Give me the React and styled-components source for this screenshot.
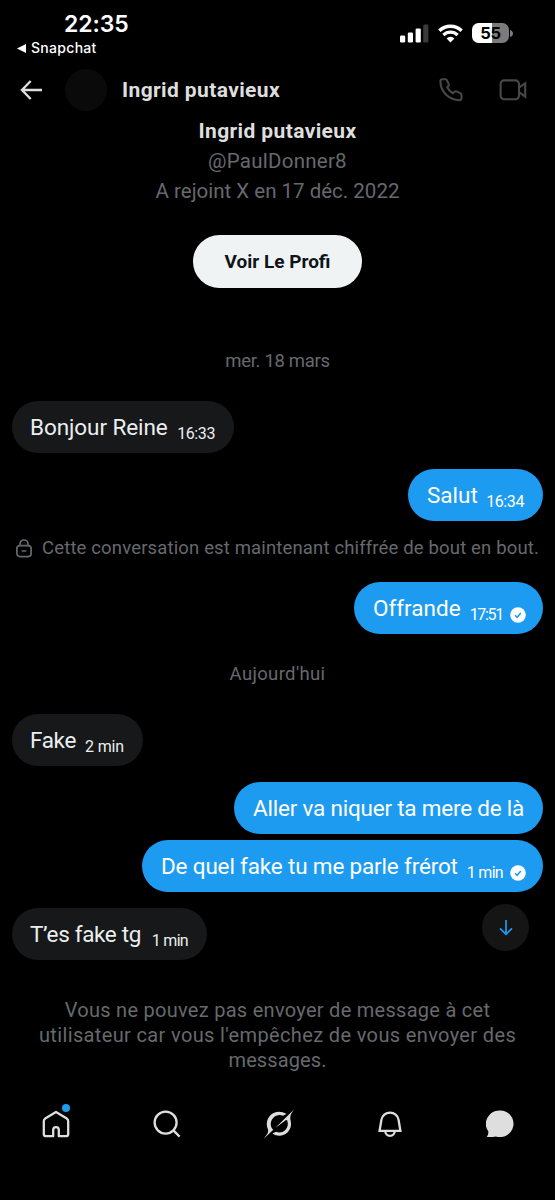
import React from "react";
import styled, { createGlobalStyle } from "styled-components";

const messages = [
  { id: 1, kind: "date", text: "mer. 18 mars", top: 0, spacing: -0.3 },
  { id: 2, kind: "in", text: "Bonjour Reine", time: "16:33", width: 222, top: 28, spacing: -0.08, timeSpacing: -0.4 },
  { id: 3, kind: "out", text: "Salut", time: "16:34", width: 135, top: 16, spacing: 0, timeSpacing: -0.4 },
  { id: 4, kind: "lock", text: "Cette conversation est maintenant chiffrée de bout en bout.", top: 15, spacing: 0.15 },
  { id: 5, kind: "out", text: "Offrande", time: "17:51", seen: true, width: 189, top: 22, spacing: 0, timeSpacing: -1.3 },
  { id: 6, kind: "date", text: "Aujourd'hui", top: 28, spacing: 0.35 },
  { id: 7, kind: "in", text: "Fake", time: "2 min", width: 131, top: 28, spacing: -0.35, timeSpacing: -0.15 },
  { id: 8, kind: "out", text: "Aller va niquer ta mere de là", width: 309, top: 16, spacing: -0.21 },
  { id: 9, kind: "out", text: "De quel fake tu me parle frérot", time: "1 min", seen: true, width: 401, top: 6, spacing: -0.17, timeSpacing: -0.7 },
  { id: 10, kind: "in", text: "T’es fake tg", time: "1 min", width: 195, top: 16, spacing: -0.35, timeSpacing: -0.7 }
];

const StatusBar = () => (
  <StatusStyled>
    <Clock>
      <Time>22:35</Time>
      <BackApp>
        <svg width="9" height="9" viewBox="0 0 9 9"><path d="M0 4.5 9 0v9z" fill="#fff" /></svg>
        Snapchat
      </BackApp>
    </Clock>
    <StatusIcons>
      <svg width="29" height="19" viewBox="0 0 29 19" fill="#fff">
        <rect x="0" y="11.5" width="5.2" height="7" rx="1.3" />
        <rect x="7.8" y="8.5" width="5.2" height="10" rx="1.3" />
        <rect x="15.6" y="4.5" width="5.2" height="14" rx="1.3" />
        <rect x="23.2" y="0.5" width="5.2" height="18" rx="1.3" fill="#3a3a3a" />
      </svg>
      <svg width="25" height="19" viewBox="0 0 25 19" fill="none" stroke="#fff">
        <path d="M1.4 6.8a15.8 15.8 0 0 1 22.2 0" strokeWidth="3.4" />
        <path d="M5.4 11a10 10 0 0 1 14.2 0" strokeWidth="3.2" />
        <path d="M12.5 18.4 8.6 14.4a5.6 5.6 0 0 1 7.8 0z" fill="#fff" stroke="none" />
      </svg>
      <Battery>
        <BatteryLevel>55</BatteryLevel>
        <svg width="3" height="7" viewBox="0 0 3 7"><path d="M0 0c4 1 4 6 0 7z" fill="#7b7b7b" /></svg>
      </Battery>
    </StatusIcons>
  </StatusStyled>
);

const Header = () => (
  <HeaderStyled>
    <svg width="22" height="20" viewBox="0 0 22 20" fill="none" stroke="#dedede" strokeWidth="2.4">
      <path d="M10.7 1 2 10l8.700 9M2 10h20" />
    </svg>
    <Avatar />
    <HeaderName>Ingrid putavieux</HeaderName>
    <PhoneIcon width="24" height="24" viewBox="0 0 24 24" fill="none" stroke="#484848" strokeWidth="2.1" strokeLinejoin="round">
      <path d="M3.400 1.300H6.300Q7.400 1.300 7.900 2.300L9.700 5.900Q10.200 7 9.400 7.900L8.200 9.200Q9.900 13 14 15.200L15.600 13.700Q16.500 12.900 17.500 13.400L21.600 15.400Q22.500 15.900 22.500 16.900V20.200Q22.500 22.200 20.500 22.200C10.500 22.200 1.400 14 1.400 3.300Q1.400 1.300 3.400 1.300Z" />
    </PhoneIcon>
    <svg width="28" height="22" viewBox="0 0 28 22" fill="none" stroke="#484848" strokeWidth="2.1">
      <rect x="1.600" y="1.400" width="18.400" height="18.800" rx="3.600" />
      <path d="M20 8.600 26.200 4.200v13.400L20 13.200" />
    </svg>
  </HeaderStyled>
);

const Message = ({ item }) => {
  if (item.kind === "date") {
    return <Note $top={item.top} $spacing={item.spacing}>{item.text}</Note>;
  }
  if (item.kind === "lock") {
    return (
      <Note $top={item.top} $spacing={item.spacing}>
        <LockIcon width="16" height="19" viewBox="0 0 16 19" fill="none" stroke="#66696d" strokeWidth="1.7">
          <rect x="0.9" y="6.6" width="14.2" height="11" rx="3" />
          <path d="M4 6.6V5a4 4 0 0 1 8 0v1.6M5.6 12h4.8" />
        </LockIcon>
        {item.text}
      </Note>
    );
  }
  return (
    <Bubble $mine={item.kind === "out"} $width={item.width} $top={item.top}>
      <BubbleText $spacing={item.spacing}>{item.text}</BubbleText>
      {item.time && <BubbleTime $spacing={item.timeSpacing}>{item.time}</BubbleTime>}
      {item.seen && (
        <SeenIcon width="16" height="16" viewBox="0 0 16 16">
          <circle cx="8" cy="8" r="7.8" fill="#fff" />
          <path d="m5 8.3 2.1 2 3.7-4.3" fill="none" stroke="#1d9bf0" strokeWidth="1.5" />
        </SeenIcon>
      )}
    </Bubble>
  );
};

const TabBar = () => (
  <TabBarStyled>
    <Tab>
      <svg width="28" height="28" viewBox="0 0 28 28" fill="none" stroke="#dedede" strokeWidth="2.3" strokeLinejoin="round">
        <path d="M11.2 26.2H4a2.2 2.2 0 0 1-2.2-2.2V11.2Q1.8 9.6 3.2 8.6L14 2l10.8 6.6Q26.2 9.6 26.2 11.2V24a2.2 2.2 0 0 1-2.2 2.2h-7.200V20a2.800 2.800 0 0 0-5.600 0z" />
      </svg>
      <Badge />
    </Tab>
    <Tab>
      <svg width="28" height="28" viewBox="0 0 28 28" fill="none" stroke="#dedede" strokeWidth="2.3">
        <circle cx="12.600" cy="12.600" r="11" />
        <path d="m20.400 20.400 6.200 6.200" />
      </svg>
    </Tab>
    <Tab $shift={2}>
      <svg width="32" height="32" viewBox="0 0 32 32" fill="#dedede">
        <path d="M12.200 20 22.700 12.200c.5-.4 1.250-.25 1.500.35 1.300 3.150.7 6.900-1.850 9.450-2.550 2.550-6.100 3.100-9.350 1.850l-3.550 1.650c5.100 3.500 11.300 2.600 15.200-1.250 3.050-3.050 4-7.250 3.100-11.050C26.500 7.800 28 5.500 31.500 1L12.200 20M10.300 21.700C6.600 18.200 7.250 12.800 10.400 9.650c2.350-2.350 6.200-3.300 9.550-1.900l3.550-1.650C17.700 2.500 11.200 3.500 7.400 7.300c-3.450 3.450-4.550 8.800-2.650 13.400C6.200 24.100 3.900 26.500 1 30.500z" />
      </svg>
    </Tab>
    <Tab $shift={2}>
      <svg width="24" height="28" viewBox="0 0 24 28" fill="none" stroke="#dedede" strokeWidth="2.3">
        <path d="M1.600 20.800 3.400 10a8.700 8.700 0 0 1 17.200 0l1.800 10.800zM7.200 21a4.800 4.800 0 0 0 9.600 0" />
      </svg>
    </Tab>
    <Tab>
      <svg width="28" height="28" viewBox="0 0 28 28" fill="#dedede">
        <path d="M14.300.5a13.500 13.300 0 1 1-4.600 25.900Q5.500 27.600.6 26.800q2.200-2.300 1.700-5.500A13.500 13.300 0 0 1 14.300.5z" />
      </svg>
    </Tab>
  </TabBarStyled>
);

const App = () => (
  <>
    <GlobalStyle />
    <Screen>
      <StatusBar />
      <Header />
      <Profile>
        <ProfileName>Ingrid putavieux</ProfileName>
        <ProfileLine $spacing={0.25}>@PaulDonner8</ProfileLine>
        <ProfileLine $spacing={0}>A rejoint X en 17 déc. 2022</ProfileLine>
        <ProfileButton>Voir Le Profi</ProfileButton>
      </Profile>
      <Conversation>
        {messages.map((item) => (
          <Message key={item.id} item={item} />
        ))}
        <ScrollButton>
          <svg width="14" height="16" viewBox="0 0 14 16" fill="none" stroke="#1d9bf0" strokeWidth="1.7">
            <path d="M7 0v14M1 8.3l6 6 6-6" />
          </svg>
        </ScrollButton>
      </Conversation>
      <Blocked>
        <BlockedLine $spacing={0.28}>Vous ne pouvez pas envoyer de message à cet</BlockedLine>
        <BlockedLine $spacing={0.36}>utilisateur car vous l'empêchez de vous envoyer des</BlockedLine>
        <BlockedLine $spacing={0.1}>messages.</BlockedLine>
      </Blocked>
      <TabBar />
    </Screen>
  </>
);

export default App;

const GlobalStyle = createGlobalStyle`
  body {
    margin: 0;
    background-color: #000;
  }
  * {
    box-sizing: border-box;
  }
  svg {
    display: block;
    flex-shrink: 0;
  }
`;

const Screen = styled.div`
  width: 555px;
  height: 1200px;
  background-color: #000;
  font-family: Roboto, sans-serif;
  overflow: hidden;
  white-space: nowrap;
  display: flex;
  flex-direction: column;
`;

const StatusStyled = styled.div`
  height: 66px;
  flex-shrink: 0;
  padding: 10px 42px 0 17px;
  display: flex;
  justify-content: space-between;
  font-family: Inter, sans-serif;
  color: #fff;
`;

const Clock = styled.div`
  display: flex;
  flex-direction: column;
`;

const Time = styled.div`
  padding-left: 47px;
  font-size: 23px;
  font-weight: 600;
  line-height: 28px;
  letter-spacing: -0.1px;
`;

const BackApp = styled.div`
  display: flex;
  align-items: center;
  gap: 5px;
  font-size: 14px;
  font-weight: 500;
  line-height: 20px;
  letter-spacing: 0.3px;
`;

const StatusIcons = styled.div`
  display: flex;
  align-items: center;
  gap: 9px;
  height: 20px;
  margin-top: 13px;
`;

const Battery = styled.div`
  display: flex;
  align-items: center;
  gap: 1px;
`;

const BatteryLevel = styled.div`
  width: 37px;
  height: 20px;
  border-radius: 6.5px;
  background: linear-gradient(to right, #fff 55%, #7b7b7b 55%);
  color: #000;
  font-size: 16.5px;
  font-weight: 700;
  line-height: 20px;
  letter-spacing: -0.3px;
  text-align: center;
`;

const HeaderStyled = styled.div`
  height: 48px;
  flex-shrink: 0;
  padding: 0 28px 0 20px;
  display: flex;
  align-items: center;
`;

const Avatar = styled.div`
  width: 42px;
  height: 42px;
  margin-left: 23px;
  border-radius: 50%;
  background-color: #0a0a0a;
`;

const HeaderName = styled.div`
  flex: 1;
  margin-left: 15px;
  color: #dedede;
  font-size: 21px;
  font-weight: 700;
  letter-spacing: 0.38px;
`;

const PhoneIcon = styled.svg`
  margin-right: 36px;
`;

const Profile = styled.div`
  height: 235px;
  flex-shrink: 0;
  padding-top: 2px;
  display: flex;
  flex-direction: column;
  align-items: center;
`;

const ProfileName = styled.div`
  color: #dedede;
  font-size: 21px;
  font-weight: 700;
  line-height: 30px;
  letter-spacing: 0.38px;
`;

const ProfileLine = styled.div`
  color: #66696d;
  font-size: 20.5px;
  line-height: 30px;
  letter-spacing: ${(props) => props.$spacing}px;
`;

const ProfileButton = styled.button`
  width: 169px;
  height: 53px;
  margin-top: 29px;
  padding: 0;
  border: none;
  border-radius: 27px;
  background-color: #eff3f4;
  color: #0f1419;
  font-family: inherit;
  font-size: 19px;
  font-weight: 700;
`;

const Conversation = styled.div`
  position: relative;
  height: 612px;
  flex-shrink: 0;
  padding: 0 12px;
  display: flex;
  flex-direction: column;
`;

const Note = styled.div`
  height: 24px;
  margin-top: ${(props) => props.$top}px;
  display: flex;
  justify-content: center;
  align-items: center;
  color: #66696d;
  font-size: 18.5px;
  letter-spacing: ${(props) => props.$spacing}px;
`;

const LockIcon = styled.svg`
  margin-right: 10px;
`;

const Bubble = styled.div`
  align-self: ${(props) => (props.$mine ? "flex-end" : "flex-start")};
  width: ${(props) => props.$width}px;
  height: 52px;
  margin-top: ${(props) => props.$top}px;
  padding: 0 19px 0 ${(props) => (props.$mine ? 19 : 18)}px;
  border-radius: 26px;
  background-color: ${(props) => (props.$mine ? "#1d9bf0" : "#16181a")};
  color: ${(props) => (props.$mine ? "#fff" : "#eceeef")};
  display: flex;
  align-items: center;
`;

const BubbleText = styled.span`
  font-size: 22.5px;
  letter-spacing: ${(props) => props.$spacing}px;
`;

const BubbleTime = styled.span`
  margin-left: auto;
  margin-top: 13px;
  font-size: 16px;
  letter-spacing: ${(props) => props.$spacing}px;
`;

const SeenIcon = styled.svg`
  margin-left: 7px;
  margin-right: -2px;
  margin-top: 13px;
`;

const ScrollButton = styled.div`
  position: absolute;
  right: 26px;
  bottom: 10px;
  width: 47px;
  height: 47px;
  border-radius: 50%;
  background-color: #151515;
  display: flex;
  justify-content: center;
  align-items: center;
`;

const Blocked = styled.div`
  height: 112px;
  flex-shrink: 0;
  padding-top: 37px;
`;

const BlockedLine = styled.div`
  color: #66696d;
  font-size: 20px;
  line-height: 25px;
  letter-spacing: ${(props) => props.$spacing}px;
  text-align: center;
`;

const TabBarStyled = styled.div`
  height: 102px;
  padding-top: 21px;
  display: grid;
  grid-template-columns: repeat(5, 111px);
`;

const Tab = styled.div`
  position: relative;
  height: 60px;
  padding-left: ${(props) => props.$shift || 0}px;
  display: flex;
  justify-content: center;
  align-items: center;
`;

const Badge = styled.div`
  position: absolute;
  top: 10px;
  left: 62px;
  width: 8px;
  height: 8px;
  border-radius: 50%;
  background-color: #1d9bf0;
`;
